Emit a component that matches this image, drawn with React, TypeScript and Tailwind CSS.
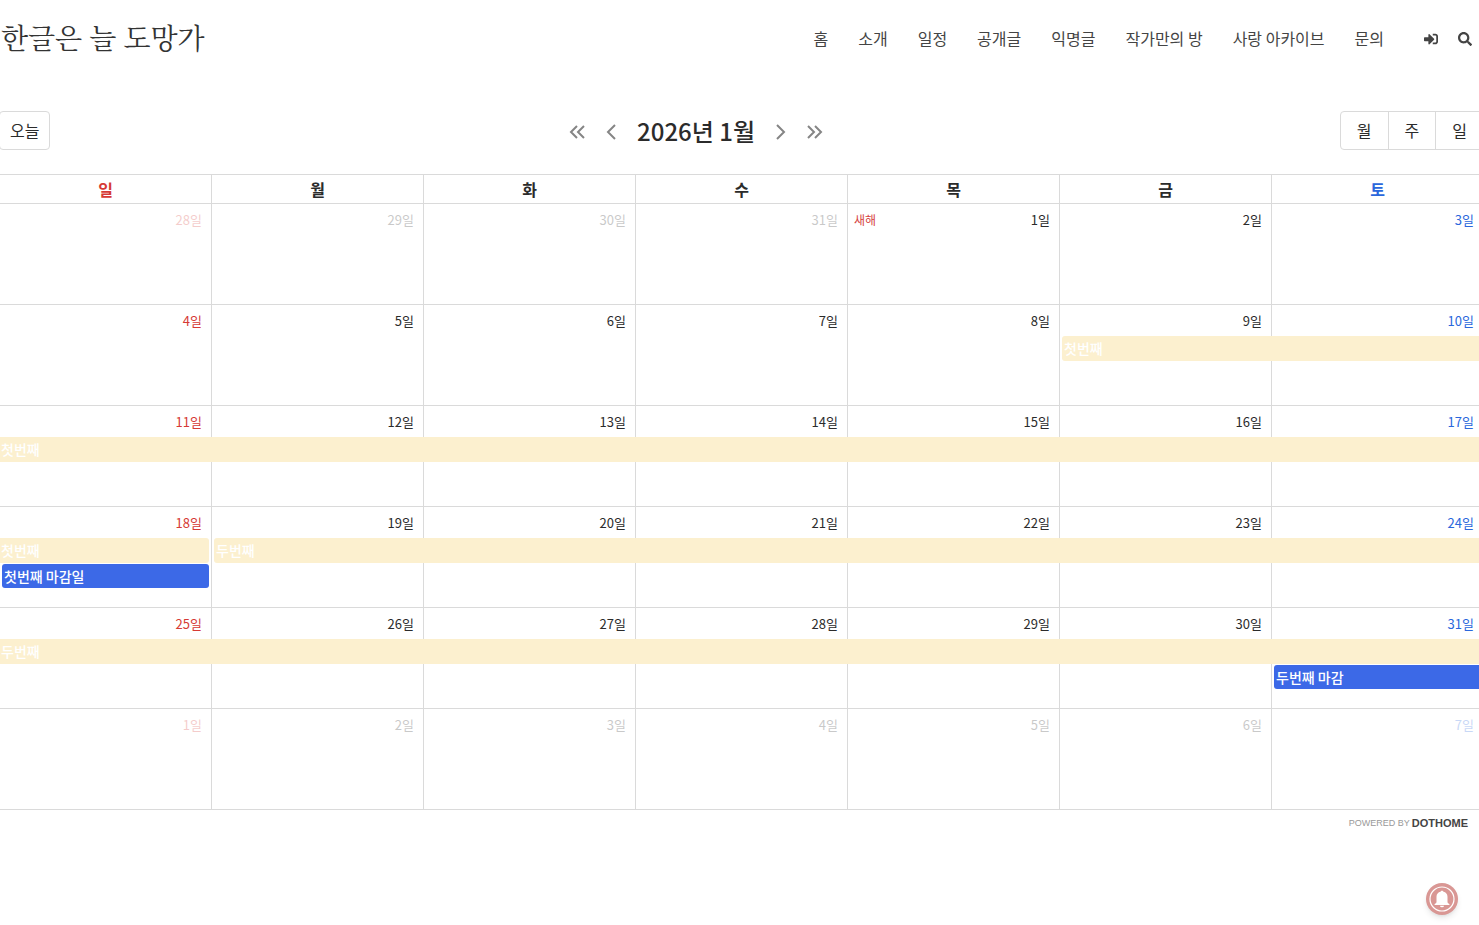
import clsx from "clsx";
import { FaSearch, FaSignInAlt } from "react-icons/fa";

type CalendarEvent = {
  title: string;
  kind: "period" | "deadline";
  span: number;
  continued?: boolean;
  ends?: boolean;
};

type Day = {
  day: number;
  outside?: boolean;
  holiday?: string;
  events?: CalendarEvent[];
};

const menu = ["홈", "소개", "일정", "공개글", "익명글", "작가만의 방", "사랑 아카이브", "문의"];
const weekdays = ["일", "월", "화", "수", "목", "금", "토"];
const views = ["월", "주", "일"];

const weeks: Day[][] = [
  [
    { day: 28, outside: true },
    { day: 29, outside: true },
    { day: 30, outside: true },
    { day: 31, outside: true },
    { day: 1, holiday: "새해" },
    { day: 2 },
    { day: 3 },
  ],
  [
    { day: 4 },
    { day: 5 },
    { day: 6 },
    { day: 7 },
    { day: 8 },
    { day: 9, events: [{ title: "첫번째", kind: "period", span: 2 }] },
    { day: 10 },
  ],
  [
    { day: 11, events: [{ title: "첫번째", kind: "period", span: 7, continued: true }] },
    { day: 12 },
    { day: 13 },
    { day: 14 },
    { day: 15 },
    { day: 16 },
    { day: 17 },
  ],
  [
    {
      day: 18,
      events: [
        { title: "첫번째", kind: "period", span: 1, continued: true, ends: true },
        { title: "첫번째 마감일", kind: "deadline", span: 1, ends: true },
      ],
    },
    { day: 19, events: [{ title: "두번째", kind: "period", span: 6 }] },
    { day: 20 },
    { day: 21 },
    { day: 22 },
    { day: 23 },
    { day: 24 },
  ],
  [
    { day: 25, events: [{ title: "두번째", kind: "period", span: 7, continued: true }] },
    { day: 26 },
    { day: 27 },
    { day: 28 },
    { day: 29 },
    { day: 30 },
    { day: 31, events: [{ title: "두번째 마감", kind: "deadline", span: 1, ends: true }] },
  ],
  [
    { day: 1, outside: true },
    { day: 2, outside: true },
    { day: 3, outside: true },
    { day: 4, outside: true },
    { day: 5, outside: true },
    { day: 6, outside: true },
    { day: 7, outside: true },
  ],
];

function dayColor(col: number) {
  if (col === 0) return "text-[#d63a35]";
  if (col === 6) return "text-[#2a67dc]";
  return "text-[#2b2b2b]";
}

function Chevron({ label, points }: { label: string; points: string[] }) {
  return (
    <button type="button" aria-label={label} className="flex size-4 items-center justify-center text-[#858585]">
      <svg viewBox="0 0 16 16" className="size-4" fill="none" stroke="currentColor" strokeWidth="2">
        {points.map((p) => (
          <polyline key={p} points={p} />
        ))}
      </svg>
    </button>
  );
}

function EventBar({ event, stacked }: { event: CalendarEvent; stacked: boolean }) {
  // 칸 사이 테두리만큼 더하고, 시작과 끝의 여백만큼 뺀다
  const extra = event.span - 1 - (event.continued ? 0 : 2) - (event.ends ? 2 : 0);

  return (
    <div
      className={clsx(
        "relative z-10 truncate text-sm leading-6 font-medium text-white",
        event.kind === "period" ? "h-[25px] bg-[#fcf0cf]" : "h-6 bg-[#3c69e7]",
        event.continued ? "pl-px" : "ml-0.5 rounded-l-[3px] pl-0.5",
        event.ends && "rounded-r-[3px]",
        stacked && "mt-px"
      )}
      style={{ width: `calc(${event.span * 100}% + ${extra}px)` }}
    >
      {event.title}
    </div>
  );
}

function DayCell({ data, col }: { data: Day; col: number }) {
  return (
    <td className="h-[101px] border-r border-b border-[#dadada] p-0 align-top">
      <div
        className={clsx(
          "flex h-[31px] items-center justify-between pr-[9px] pl-1.5 text-[13px] leading-5",
          dayColor(col)
        )}
      >
        <span className="text-xs text-[#d6443f]">{data.holiday}</span>
        <span className={clsx(data.outside && "opacity-25")}>{data.day}일</span>
      </div>
      {/* 31일처럼 앞선 일정이 지나가는 칸은 한 줄 비워 둔다 */}
      {data.day === 31 && data.events && <div className="h-[25px]" />}
      {data.events?.map((event, i) => (
        <EventBar key={event.title} event={event} stacked={i > 0 || event.kind === "deadline"} />
      ))}
    </td>
  );
}

export default function App() {
  return (
    <div className="relative min-h-screen overflow-x-hidden bg-white font-['Noto_Sans_CJK_KR','Noto_Sans',sans-serif] text-[#2b2b2b]">
      <header className="flex h-[78px] items-center justify-between pr-[7px] text-[#444]">
        <h1 className="pb-1 pl-px font-['Noto_Serif_CJK_KR','Noto_Serif_KR','Nanum_Myeongjo','Noto_Sans_CJK_KR',serif] text-[28px] font-normal text-[#333]">
          <a href="#">한글은 늘 도망가</a>
        </h1>
        <div className="flex items-center">
          <nav className="flex gap-[30px] pb-0.5 text-base">
            {menu.map((item) => (
              <a key={item} href="#">
                {item}
              </a>
            ))}
          </nav>
          <a href="#" aria-label="로그인" className="ml-10">
            <FaSignInAlt className="size-3.5" />
          </a>
          <button type="button" aria-label="검색" className="ml-5">
            <FaSearch className="size-3.5" />
          </button>
        </div>
      </header>

      <main className="w-[calc(100%+5px)] pt-[33px]">
        <div className="mb-6 flex items-center">
          <div className="flex flex-1">
            <button
              type="button"
              className="-ml-px h-[39px] rounded border border-[#dadada] px-2.5 pb-0.5 text-base"
            >
              오늘
            </button>
          </div>
          <div className="mr-[92px] flex items-center">
            <div className="flex gap-[18px] pt-0.5">
              <Chevron label="이전 해" points={["8,2 2,8 8,14", "15,2 9,8 15,14"]} />
              <Chevron label="이전 달" points={["12,1 5,8 12,15"]} />
            </div>
            <h2 className="mx-[18px] text-2xl leading-[39px] font-medium">2026년 1월</h2>
            <div className="flex gap-[18px] pt-0.5">
              <Chevron label="다음 달" points={["4,1 11,8 4,15"]} />
              <Chevron label="다음 해" points={["1,2 7,8 1,14", "8,2 14,8 8,14"]} />
            </div>
          </div>
          <div className="flex flex-1 justify-end">
            {views.map((view) => (
              <button
                key={view}
                type="button"
                className="-ml-px h-[39px] border border-[#dadada] px-4 pb-0.5 text-base first:rounded-l last:rounded-r"
              >
                {view}
              </button>
            ))}
          </div>
        </div>

        <table className="w-full table-fixed border-separate border-spacing-0 border-t border-[#dadada]">
          <thead>
            <tr>
              {weekdays.map((name, col) => (
                <th
                  key={name}
                  scope="col"
                  className={clsx(
                    "h-[29px] border-r border-b border-[#dadada] p-0 text-base leading-7 font-bold",
                    dayColor(col)
                  )}
                >
                  {name}
                </th>
              ))}
            </tr>
          </thead>
          <tbody>
            {weeks.map((week, row) => (
              <tr key={row}>
                {week.map((data, col) => (
                  <DayCell key={col} data={data} col={col} />
                ))}
              </tr>
            ))}
          </tbody>
        </table>
      </main>

      <footer className="flex justify-end pt-[5px] pr-[11px]">
        <a href="#" className="flex items-center gap-0.5 font-['Liberation_Sans',sans-serif] leading-4">
          <span className="text-[9px] text-[#999]">POWERED BY</span>
          <span className="text-[11px] font-bold text-[#444]">DOTHOME</span>
        </a>
      </footer>

      <button
        type="button"
        aria-label="알림"
        className="fixed right-[21px] bottom-2.5 size-8 rounded-full bg-[#d99794] shadow-md"
      >
        <svg viewBox="0 0 32 32" className="size-8">
          <circle cx="16" cy="16" r="12" fill="none" stroke="#fff" strokeWidth="1.2" />
          <path
            d="M16 7.800c-.8 0-1.300.4-1.400 1-2.500.4-4.100 2.300-4.100 4.900v5c0 1-.5 1.600-1.900 2.200v1h14.800v-1c-1.400-.6-1.900-1.200-1.900-2.200v-5c0-2.600-1.600-4.500-4.100-4.900-.1-.6-.6-1-1.400-1zM14 22.700h4a2 1.600 0 0 1-4 0z"
            fill="#fff"
          />
        </svg>
      </button>
    </div>
  );
}
